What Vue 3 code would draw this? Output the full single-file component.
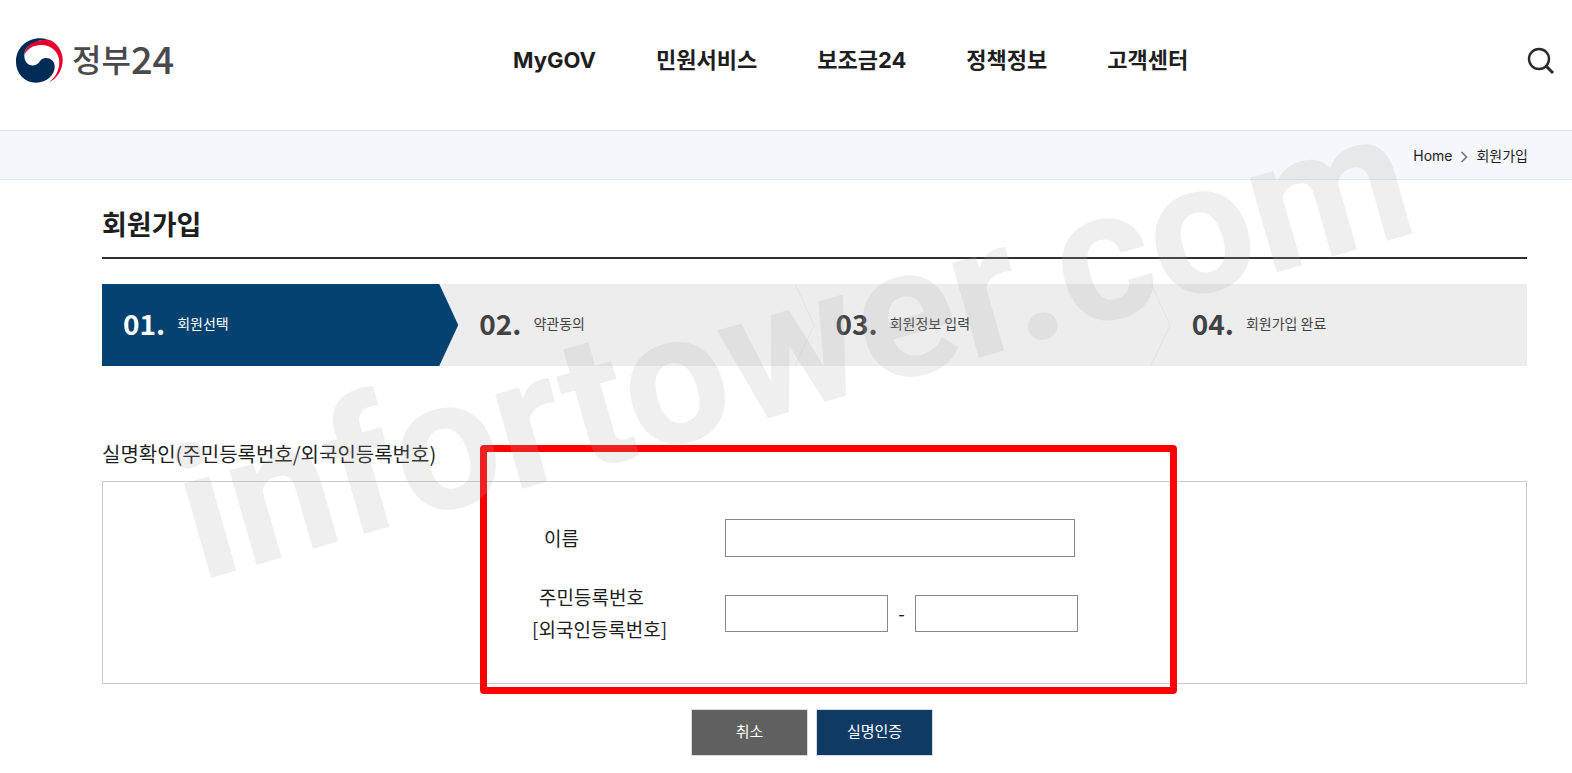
<script setup>
import { ref } from 'vue'

const menu = ['MyGOV', '민원서비스', '보조금24', '정책정보', '고객센터']
const steps = [
  { no: '01.', label: '회원선택' },
  { no: '02.', label: '약관동의' },
  { no: '03.', label: '회원정보 입력' },
  { no: '04.', label: '회원가입 완료' },
]
const current = 0
const name = ref('')
const idFront = ref('')
const idBack = ref('')
</script>

<template>
  <div class="page">
    <header class="header">
      <a class="logo" href="#">
        <svg class="emblem" viewBox="0 0 48 48" aria-hidden="true">
          <path d="M8.500 18 C8.500 10 16 4 24 3.500 C28 2 32 2 35 3.500 C42 7 46.700 15 46.700 23 C46.700 33 41 42 32.300 45.700 C38.500 41.500 43.300 34 43.300 25 C43.300 15 35 8 25.700 8 C17 8 11 12 8.500 18Z" fill="#e6002d" />
          <path d="M32 2.500 C16 -2.500 0 8 0 24.500 C0 37 9 45.700 20 45.700 C31 45.700 38.700 38 38.700 29.500 C38.700 24 34.500 21 30 21 C24 21 24.500 25.500 20.500 27.500 C14 30.500 8.500 26 8.300 19 C8 9 18 3 32 2.500Z" fill="#002b54" />
        </svg>
        <span class="logo-text">정부<span class="logo-num">24</span></span>
      </a>
      <nav class="menu">
        <a v-for="item in menu" :key="item" href="#">{{ item }}</a>
      </nav>
      <button class="search" type="button" aria-label="검색">
        <svg viewBox="0 0 28 28" aria-hidden="true">
          <circle cx="12" cy="12" r="10" fill="none" stroke="#2b2b2b" stroke-width="2.400" />
          <path d="M19 19 L26 26" stroke="#2b2b2b" stroke-width="3" />
        </svg>
      </button>
    </header>

    <nav class="crumbs">
      <a class="home" href="#">Home</a>
      <svg viewBox="0 0 8 12" aria-hidden="true">
        <path d="M1.500 1 L6.500 6 L1.500 11" fill="none" stroke="#77777d" stroke-width="1.700" />
      </svg>
      <a href="#">회원가입</a>
    </nav>

    <main class="content">
      <h1>회원가입</h1>

      <ol class="steps">
        <li v-for="(step, i) in steps" :key="step.no" :class="{ on: i === current }">
          <strong>{{ step.no }}</strong>
          <span>{{ step.label }}</span>
          <svg v-if="i < steps.length - 1 && i !== current" class="divider" viewBox="0 0 20 82" preserveAspectRatio="none" aria-hidden="true">
            <path d="M0 0 L19 41 L0 82" fill="none" stroke="#e2e2e2" />
          </svg>
        </li>
      </ol>

      <h2>실명확인(주민등록번호/외국인등록번호)</h2>

      <form @submit.prevent>
        <div class="panel">
          <div class="fields">
            <label class="name-label" for="name">이름</label>
            <input id="name" v-model="name" type="text" />
            <label class="id-label" for="id-front">주민등록번호<br />[외국인등록번호]</label>
            <div class="id-row">
              <input id="id-front" v-model="idFront" type="text" />
              <span>-</span>
              <input v-model="idBack" type="password" aria-label="주민등록번호 뒷자리" />
            </div>
          </div>
        </div>
        <div class="actions">
          <button type="button" class="cancel">취소</button>
          <button type="submit" class="confirm">실명인증</button>
        </div>
      </form>
    </main>

    <svg class="watermark" aria-hidden="true">
      <text transform="translate(200 581) rotate(-16)">infortower.com</text>
    </svg>
  </div>
</template>

<style>
body {
  margin: 0;
  background: #fff;
}
</style>

<style scoped>
.page {
  position: relative;
  overflow: hidden;
  min-height: 100vh;
  box-sizing: border-box;
  color: #1e1e1e;
  font-family: "Noto Sans CJK KR", sans-serif;
}
a {
  color: inherit;
  text-decoration: none;
}
.header {
  display: flex;
  align-items: center;
  justify-content: space-between;
  height: 122px;
  padding: 0 17px 8px 16px;
}
.logo {
  display: flex;
  align-items: center;
  gap: 8px;
  height: 48px;
  color: #4a4a4c;
}
.emblem {
  width: 48px;
  height: 48px;
}
.logo-text {
  display: flex;
  align-items: center;
  padding-bottom: 6px;
  font-size: 32px;
  font-weight: 500;
  line-height: 48px;
}
.logo-num {
  font-size: 38px;
}
.menu {
  display: flex;
  gap: 60px;
  padding-bottom: 3px;
  font-family: Inter, "Noto Sans CJK KR", sans-serif;
  font-size: 22px;
  font-weight: 700;
  line-height: 32px;
}
.search {
  width: 28px;
  height: 28px;
  padding: 0;
  border: 0;
  background: none;
}
.search svg {
  display: block;
}
.crumbs {
  display: flex;
  align-items: center;
  justify-content: flex-end;
  gap: 8px;
  height: 48px;
  padding-right: 44px;
  border-top: 1px solid #dfe2ec;
  border-bottom: 1px solid #e6e6e8;
  background: #f5f7fc;
  font-family: Inter, "Noto Sans CJK KR", sans-serif;
  font-size: 14px;
}
.crumbs svg {
  width: 8px;
  height: 12px;
  padding-top: 4px;
}
.content {
  padding: 0 45px 16px 102px;
}
h1 {
  margin: 0 0 25px;
  padding: 24px 0 13px;
  border-bottom: 2px solid #303033;
  font-size: 27px;
  font-weight: 700;
  line-height: 40px;
}
.steps {
  display: grid;
  grid-template-columns: repeat(4, 1fr);
  margin: 0;
  padding: 0;
  list-style: none;
  background: #ededed;
}
.steps li {
  position: relative;
  display: flex;
  align-items: center;
  gap: 12px;
  box-sizing: border-box;
  height: 82px;
  padding: 0 0 4px 21px;
  color: #424245;
}
.steps strong {
  font-size: 28px;
  font-weight: 700;
}
.steps span {
  font-size: 14px;
}
.steps .on {
  background: #044272;
  color: #fff;
  clip-path: polygon(0 0, calc(100% - 19px) 0, 100% 50%, calc(100% - 19px) 100%, 0 100%);
}
.divider {
  position: absolute;
  top: 0;
  right: 0;
  width: 20px;
  height: 82px;
}
h2 {
  margin: 72px 0 11px;
  font-size: 20px;
  font-weight: 400;
  line-height: 32px;
}
.panel {
  padding-left: 28px;
  border: 1px solid #ccc;
}
.fields {
  position: relative;
  display: grid;
  grid-template-columns: 193px 353px;
  row-gap: 24px;
  align-items: center;
  box-sizing: border-box;
  width: 697px;
  margin: 0 auto;
  padding: 37px 0 38px 52px;
  font-size: 19px;
  line-height: 32px;
}
/* Highlight frame drawn over the panel edges */
.fields::after {
  position: absolute;
  inset: -37px 0 -11px;
  border: 7px solid #f00;
  border-radius: 4px;
  content: "";
  pointer-events: none;
}
.fields label {
  justify-self: start;
  white-space: nowrap;
}
.fields .name-label {
  padding-left: 12px;
}
.fields .id-label {
  text-indent: 7px;
}
.fields input {
  box-sizing: border-box;
  width: 350px;
  height: 38px;
  padding: 0 8px;
  border: 1px solid #888;
  border-radius: 0;
  background: #fff;
  font: inherit;
}
.id-row {
  display: flex;
  align-items: center;
  justify-content: space-between;
}
.fields .id-row input {
  width: 163px;
  height: 37px;
}
.actions {
  display: flex;
  justify-content: center;
  gap: 8px;
  margin-top: 25px;
  padding-right: 5px;
}
.actions button {
  width: 117px;
  height: 47px;
  padding: 0 0 3px;
  border: 1px solid #d9dbde;
  color: #fff;
  font: 15px/24px "Noto Sans CJK KR", sans-serif;
}
.cancel {
  background: #606060;
}
.confirm {
  background: #0e3a64;
}
.watermark {
  position: absolute;
  top: 0;
  left: 0;
  width: 100%;
  height: 100%;
  pointer-events: none;
}
.watermark text {
  fill: rgba(170, 170, 170, 0.19);
  font-family: Roboto, sans-serif;
  font-size: 186px;
  font-weight: 700;
}
</style>
